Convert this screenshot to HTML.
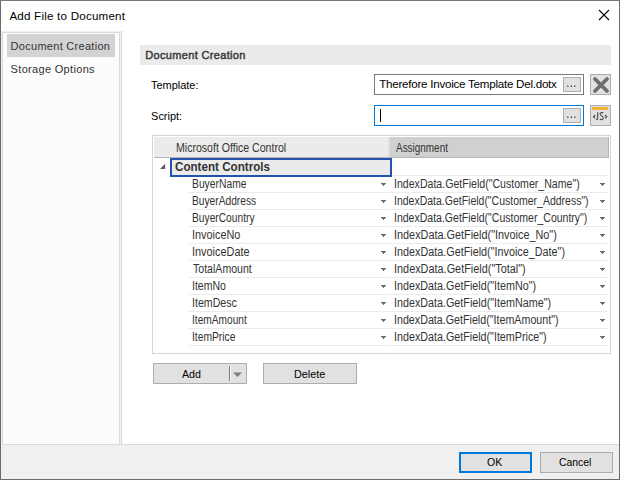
<!DOCTYPE html>
<html>
<head>
<meta charset="utf-8">
<title>Add File to Document</title>
<style>
*{box-sizing:border-box;margin:0;padding:0}
html,body{width:620px;height:480px;overflow:hidden;background:#f0f0f0}
body{font-family:"Liberation Sans",sans-serif;font-size:12px;color:#000;position:relative}
.abs{position:absolute}
.t{position:absolute;white-space:nowrap;line-height:1}
#win{left:0;top:0;width:620px;height:480px;background:#f0f0f0}
#bl{left:0;top:0;width:1px;height:480px;background:#6b6b6b}
#bt{left:0;top:0;width:620px;height:1px;background:#787878}
#br{left:619px;top:0;width:1px;height:480px;background:#6b6b6b}
#bb{left:0;top:479px;width:620px;height:1px;background:#6b6b6b}
#title{left:1px;top:1px;width:618px;height:30px;background:#fff}
#nav{left:2px;top:32px;width:118px;height:413px;background:#fcfcfc;border:1px solid #dadada}
#navsel{left:7px;top:34px;width:108px;height:23px;background:#d3d3d3}
#main{left:121px;top:31px;width:498px;height:414px;background:#fff;border:1px solid #dadada;border-right:none;border-top:none}
#sec{left:140px;top:45px;width:471px;height:20px;background:#ebebeb}
.inp{background:#fff;border:1px solid #7a7a7a}
.btn{background:#e1e1e1;border:1px solid #adadad}
.g{font-size:12.5px;color:#333;transform-origin:0 0}
.row{position:absolute;left:189px;width:420px;height:1px;background:#ebebeb}
.arr{position:absolute;width:0;height:0;border-left:3px solid transparent;border-right:3px solid transparent;border-top:3px solid #777}
</style>
</head>
<body>
<div id="win" class="abs"></div>
<div id="title" class="abs"></div>
<div class="t" id="ttl" style="left:9.40px;top:10px;font-size:11.6px;letter-spacing:0.217px">Add File to Document</div>
<svg class="abs" style="left:598px;top:9px" width="12" height="12" viewBox="0 0 12 12"><path d="M1 1 L11 11 M11 1 L1 11" stroke="#000" stroke-width="1.1" fill="none"/></svg>

<div id="nav" class="abs"></div>
<div id="navsel" class="abs"></div>
<div class="t" id="n1" style="left:10.60px;top:41px;font-size:11px;color:#333;letter-spacing:0.287px">Document Creation</div>
<div class="t" id="n2" style="left:10.60px;top:64px;font-size:11px;color:#333;letter-spacing:0.321px">Storage Options</div>

<div id="main" class="abs"></div>
<div id="sec" class="abs"></div>
<div class="t" id="sect" style="left:145.20px;top:49.6px;font-size:11px;color:#3a3a3a;-webkit-text-stroke:0.45px #3a3a3a;letter-spacing:0.341px">Document Creation</div>

<div class="t" id="lt" style="left:151.1px;top:80px;font-size:11px;letter-spacing:-0.044px">Template:</div>
<div class="t" id="ls" style="left:151.1px;top:111px;font-size:11px;letter-spacing:-0.031px">Script:</div>

<div class="abs inp" style="left:374px;top:74px;width:210px;height:21px"></div>
<div class="t" id="tv" style="left:379.2px;top:78px;font-size:11.6px;letter-spacing:-0.245px">Therefore Invoice Template Del.dotx</div>
<div class="abs btn" style="left:563px;top:77px;width:18px;height:15px"></div>
<svg class="abs" style="left:563px;top:77px" width="18" height="15"><path d="M4.35 8.6h1v1.5h-1zM7.85 8.6h1v1.5h-1zM11.35 8.6h1v1.5h-1z" fill="#1c1250"/></svg>
<div class="abs btn" style="left:590px;top:74px;width:21px;height:21px"></div>
<svg class="abs" style="left:590px;top:74px" width="21" height="21" viewBox="0 0 21 21"><path d="M5 5 L17 17 M17 5 L5 17" stroke="#6d6d6d" stroke-width="3.8" stroke-linecap="round" fill="none"/></svg>

<div class="abs inp" style="left:374px;top:105px;width:210px;height:21px;border-color:#0078d7"></div>
<div class="abs" style="left:380px;top:109px;width:1px;height:13px;background:#000"></div>
<div class="abs btn" style="left:563px;top:108px;width:18px;height:15px"></div>
<svg class="abs" style="left:563px;top:108px" width="18" height="15"><path d="M4.35 8.6h1v1.5h-1zM7.85 8.6h1v1.5h-1zM11.35 8.6h1v1.5h-1z" fill="#1c1250"/></svg>
<div class="abs btn" style="left:590px;top:105px;width:21px;height:21px"></div>
<svg class="abs" style="left:590px;top:105px" width="21" height="21" viewBox="0 0 21 21"><rect x="2" y="2" width="16.2" height="2.9" fill="#f2b02c"/><path d="M5.3 10 L3.5 11.7 L5.3 13.4 M15 10 L16.8 11.7 L15 13.4 M7.7 7.2 V13.3 Q7.7 14.8 6.1 14.6 M13.2 8.2 Q12.4 7.3 11.4 7.4 Q10.1 7.6 10.1 8.9 Q10.1 10 11.6 10.8 Q13.2 11.6 13.2 13 Q13.2 14.5 11.6 14.7 Q10.6 14.8 9.9 13.9" stroke="#444" stroke-width="1.05" fill="none"/></svg>

<!-- grid -->
<div class="abs" style="left:152px;top:135px;width:459px;height:219px;background:#fff;border:1px solid #d5d5d5"></div>
<div class="abs" style="left:154px;top:137px;width:236px;height:21px;background:#ebebeb"></div>
<div class="abs" style="left:390px;top:137px;width:219px;height:21px;background:#d0d0d0;border-right:1px solid #b4b4b4"></div>
<div class="abs" style="left:388px;top:137px;width:2px;height:20px;background:linear-gradient(90deg,#e6e6e6,#d8d8d8)"></div>
<div class="abs" style="left:154px;top:157px;width:455px;height:1px;background:#b6b6b6"></div>
<div class="t g" id="h1" style="left:176px;top:142px;transform:scaleX(0.845)">Microsoft Office Control</div>
<div class="t g" id="h2" style="left:395.5px;top:142px;transform:scaleX(0.795)">Assignment</div>

<div class="abs" style="left:170px;top:158px;width:222px;height:19px;background:#ebebeb;border:2px solid #2353ad"></div>
<div class="t g" id="cc" style="left:174.5px;top:161px;font-weight:bold;color:#333;font-size:12.2px;transform:scaleX(0.955)">Content Controls</div>
<svg class="abs" style="left:159px;top:163px" width="7" height="7" viewBox="0 0 7 7"><path d="M6.1 0.8 L6.1 5.9 L1 5.9 Z" fill="#5c5c5c"/></svg>
<div class="abs" style="left:392px;top:175px;width:217px;height:1px;background:#ebebeb"></div>

<div id="rows">
<div class="t g" style="left:192.20px;top:178px;transform:scaleX(0.8257)">BuyerName</div>
<svg class="abs" style="left:381px;top:183px" width="5" height="3" shape-rendering="crispEdges"><path d="M0 0h5v1h-1v1h-1v1h-1v-1h-1v-1h-1z" fill="#6e6e6e"/></svg>
<div class="t g" style="left:393.80px;top:178px;transform:scaleX(0.8467)">IndexData.GetField(&quot;Customer_Name&quot;)</div>
<svg class="abs" style="left:600px;top:183px" width="5" height="3" shape-rendering="crispEdges"><path d="M0 0h5v1h-1v1h-1v1h-1v-1h-1v-1h-1z" fill="#6e6e6e"/></svg>
<div class="row" style="top:192px"></div>
<div class="t g" style="left:192.20px;top:195px;transform:scaleX(0.8168)">BuyerAddress</div>
<svg class="abs" style="left:381px;top:200px" width="5" height="3" shape-rendering="crispEdges"><path d="M0 0h5v1h-1v1h-1v1h-1v-1h-1v-1h-1z" fill="#6e6e6e"/></svg>
<div class="t g" style="left:393.80px;top:195px;transform:scaleX(0.8392)">IndexData.GetField(&quot;Customer_Address&quot;)</div>
<svg class="abs" style="left:600px;top:200px" width="5" height="3" shape-rendering="crispEdges"><path d="M0 0h5v1h-1v1h-1v1h-1v-1h-1v-1h-1z" fill="#6e6e6e"/></svg>
<div class="row" style="top:209px"></div>
<div class="t g" style="left:192.20px;top:212px;transform:scaleX(0.8183)">BuyerCountry</div>
<svg class="abs" style="left:381px;top:217px" width="5" height="3" shape-rendering="crispEdges"><path d="M0 0h5v1h-1v1h-1v1h-1v-1h-1v-1h-1z" fill="#6e6e6e"/></svg>
<div class="t g" style="left:393.80px;top:212px;transform:scaleX(0.8414)">IndexData.GetField(&quot;Customer_Country&quot;)</div>
<svg class="abs" style="left:600px;top:217px" width="5" height="3" shape-rendering="crispEdges"><path d="M0 0h5v1h-1v1h-1v1h-1v-1h-1v-1h-1z" fill="#6e6e6e"/></svg>
<div class="row" style="top:226px"></div>
<div class="t g" style="left:192.20px;top:229px;transform:scaleX(0.8711)">InvoiceNo</div>
<svg class="abs" style="left:381px;top:234px" width="5" height="3" shape-rendering="crispEdges"><path d="M0 0h5v1h-1v1h-1v1h-1v-1h-1v-1h-1z" fill="#6e6e6e"/></svg>
<div class="t g" style="left:393.80px;top:229px;transform:scaleX(0.8688)">IndexData.GetField(&quot;Invoice_No&quot;)</div>
<svg class="abs" style="left:600px;top:234px" width="5" height="3" shape-rendering="crispEdges"><path d="M0 0h5v1h-1v1h-1v1h-1v-1h-1v-1h-1z" fill="#6e6e6e"/></svg>
<div class="row" style="top:243px"></div>
<div class="t g" style="left:192.20px;top:246px;transform:scaleX(0.8725)">InvoiceDate</div>
<svg class="abs" style="left:381px;top:251px" width="5" height="3" shape-rendering="crispEdges"><path d="M0 0h5v1h-1v1h-1v1h-1v-1h-1v-1h-1z" fill="#6e6e6e"/></svg>
<div class="t g" style="left:393.80px;top:246px;transform:scaleX(0.8643)">IndexData.GetField(&quot;Invoice_Date&quot;)</div>
<svg class="abs" style="left:600px;top:251px" width="5" height="3" shape-rendering="crispEdges"><path d="M0 0h5v1h-1v1h-1v1h-1v-1h-1v-1h-1z" fill="#6e6e6e"/></svg>
<div class="row" style="top:260px"></div>
<div class="t g" style="left:193.20px;top:263px;transform:scaleX(0.8461)">TotalAmount</div>
<svg class="abs" style="left:381px;top:268px" width="5" height="3" shape-rendering="crispEdges"><path d="M0 0h5v1h-1v1h-1v1h-1v-1h-1v-1h-1z" fill="#6e6e6e"/></svg>
<div class="t g" style="left:393.80px;top:263px;transform:scaleX(0.8707)">IndexData.GetField(&quot;Total&quot;)</div>
<svg class="abs" style="left:600px;top:268px" width="5" height="3" shape-rendering="crispEdges"><path d="M0 0h5v1h-1v1h-1v1h-1v-1h-1v-1h-1z" fill="#6e6e6e"/></svg>
<div class="row" style="top:277px"></div>
<div class="t g" style="left:192.20px;top:280px;transform:scaleX(0.8391)">ItemNo</div>
<svg class="abs" style="left:381px;top:285px" width="5" height="3" shape-rendering="crispEdges"><path d="M0 0h5v1h-1v1h-1v1h-1v-1h-1v-1h-1z" fill="#6e6e6e"/></svg>
<div class="t g" style="left:393.80px;top:280px;transform:scaleX(0.8608)">IndexData.GetField(&quot;ItemNo&quot;)</div>
<svg class="abs" style="left:600px;top:285px" width="5" height="3" shape-rendering="crispEdges"><path d="M0 0h5v1h-1v1h-1v1h-1v-1h-1v-1h-1z" fill="#6e6e6e"/></svg>
<div class="row" style="top:294px"></div>
<div class="t g" style="left:192.20px;top:297px;transform:scaleX(0.8494)">ItemDesc</div>
<svg class="abs" style="left:381px;top:302px" width="5" height="3" shape-rendering="crispEdges"><path d="M0 0h5v1h-1v1h-1v1h-1v-1h-1v-1h-1z" fill="#6e6e6e"/></svg>
<div class="t g" style="left:393.80px;top:297px;transform:scaleX(0.8603)">IndexData.GetField(&quot;ItemName&quot;)</div>
<svg class="abs" style="left:600px;top:302px" width="5" height="3" shape-rendering="crispEdges"><path d="M0 0h5v1h-1v1h-1v1h-1v-1h-1v-1h-1z" fill="#6e6e6e"/></svg>
<div class="row" style="top:311px"></div>
<div class="t g" style="left:192.20px;top:314px;transform:scaleX(0.8132)">ItemAmount</div>
<svg class="abs" style="left:381px;top:319px" width="5" height="3" shape-rendering="crispEdges"><path d="M0 0h5v1h-1v1h-1v1h-1v-1h-1v-1h-1z" fill="#6e6e6e"/></svg>
<div class="t g" style="left:393.80px;top:314px;transform:scaleX(0.8558)">IndexData.GetField(&quot;ItemAmount&quot;)</div>
<svg class="abs" style="left:600px;top:319px" width="5" height="3" shape-rendering="crispEdges"><path d="M0 0h5v1h-1v1h-1v1h-1v-1h-1v-1h-1z" fill="#6e6e6e"/></svg>
<div class="row" style="top:328px"></div>
<div class="t g" style="left:192.20px;top:331px;transform:scaleX(0.8223)">ItemPrice</div>
<svg class="abs" style="left:381px;top:336px" width="5" height="3" shape-rendering="crispEdges"><path d="M0 0h5v1h-1v1h-1v1h-1v-1h-1v-1h-1z" fill="#6e6e6e"/></svg>
<div class="t g" style="left:393.80px;top:331px;transform:scaleX(0.8590)">IndexData.GetField(&quot;ItemPrice&quot;)</div>
<svg class="abs" style="left:600px;top:336px" width="5" height="3" shape-rendering="crispEdges"><path d="M0 0h5v1h-1v1h-1v1h-1v-1h-1v-1h-1z" fill="#6e6e6e"/></svg>
<div class="row" style="top:345px"></div>
</div><!--endrows-->
<div class="abs" style="left:390px;top:177px;width:1px;height:170px;background:#fff"></div>

<div class="abs btn" style="left:153px;top:363px;width:94px;height:21px"></div>
<div class="t" style="left:181.5px;top:369px;font-size:11.8px;transform:scaleX(0.90);transform-origin:0 0">Add</div>
<div class="abs" style="left:229px;top:366px;width:1px;height:15px;background:#7a7a7a"></div><div class="abs" style="left:230px;top:366px;width:1px;height:15px;background:#fbfbfb"></div>
<svg class="abs" style="left:232px;top:371px" width="11" height="7"><path d="M1 1.4 L10 1.4 L5.5 6 Z" fill="#7c7c7c"/></svg>
<div class="abs btn" style="left:263px;top:363px;width:94px;height:21px"></div>
<div class="t" style="left:293.5px;top:369px;font-size:11.8px;transform:scaleX(0.92);transform-origin:0 0">Delete</div>

<div class="abs btn" style="left:459px;top:452px;width:73px;height:21px;border:2px solid #0078d7"></div>
<div class="t" style="left:487px;top:457px;font-size:11.5px;transform:scaleX(0.918);transform-origin:0 0">OK</div>
<div class="abs btn" style="left:540px;top:452px;width:73px;height:21px"></div>
<div class="t" style="left:559px;top:457px;font-size:11.5px;transform:scaleX(0.903);transform-origin:0 0">Cancel</div>

<div id="bl" class="abs"></div><div id="bt" class="abs"></div><div id="br" class="abs"></div><div id="bb" class="abs"></div>
</body>
</html>
